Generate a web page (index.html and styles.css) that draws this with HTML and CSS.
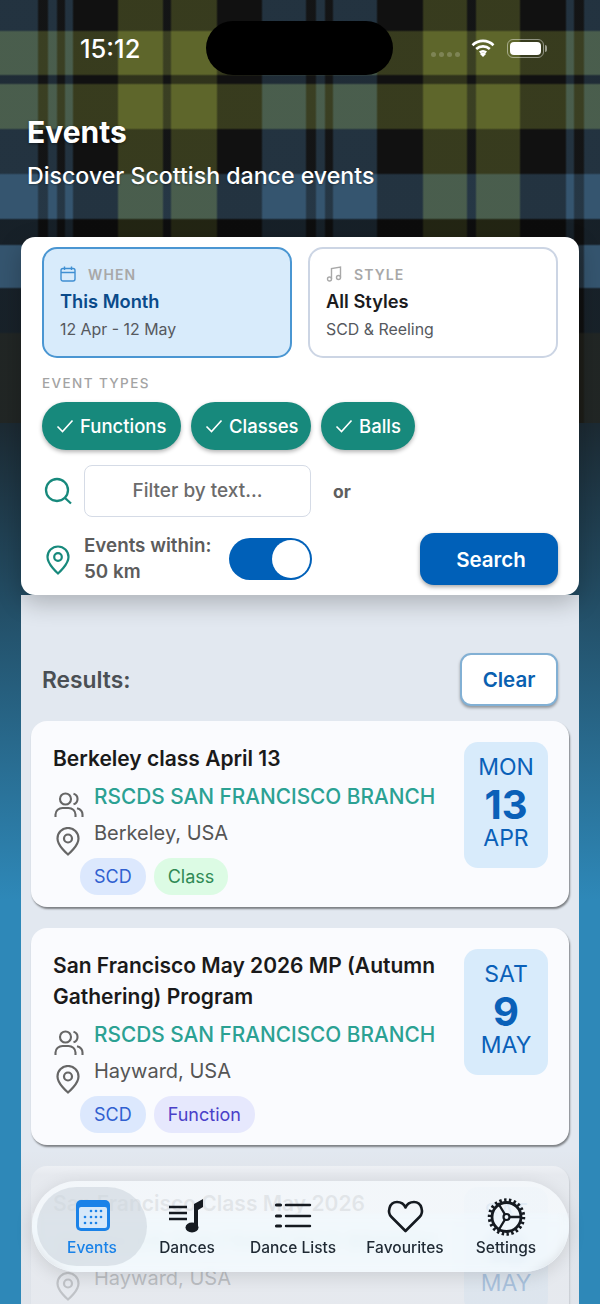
FILE: index.html
```html
<!DOCTYPE html>
<html lang="en">
<head>
  <meta charset="UTF-8">
  <meta name="viewport" content="width=device-width, initial-scale=1.0">
  <title>Events</title>
  <link rel="stylesheet" href="styles.css">
</head>
<body>
  <div class="status">
    <div class="status-time">15:12</div>
    <div class="island"></div>
    <div class="status-icons">
      <div class="signal"><span></span><span></span><span></span><span></span></div>
      <svg class="wifi" width="24" height="18" viewBox="0 0 24 18">
        <path d="M1.5 6.2a15 15 0 0 1 21 0M5.2 10a10 10 0 0 1 13.6 0M8.8 13.6a5 5 0 0 1 6.4 0" fill="none" stroke="#fff" stroke-width="2.6"/>
        <path d="M12 18l-3-3a4.4 4.4 0 0 1 6 0z" fill="#fff"/>
      </svg>
      <div class="battery"><div class="battery-fill"></div></div>
    </div>
  </div>

  <header class="page-head">
    <h1>Events</h1>
    <p>Discover Scottish dance events</p>
  </header>

  <main class="content">
    <section class="filters">
      <div class="selectors">
        <div class="selector selector-active">
          <div class="selector-label">
            <svg width="16" height="16" viewBox="0 0 16 16" fill="none" stroke="#3f8fd2" stroke-width="1.4">
              <rect x="1" y="2.5" width="14" height="12.5" rx="2"/>
              <path d="M1 6.5h14M4.5 0.5v3.5M11.5 0.5v3.5"/>
            </svg>
            <span>WHEN</span>
          </div>
          <div class="selector-title">This Month</div>
          <div class="selector-sub">12 Apr - 12 May</div>
        </div>
        <div class="selector">
          <div class="selector-label">
            <svg width="16" height="16" viewBox="0 0 16 16" fill="none" stroke="#a8a8a8" stroke-width="1.4">
              <path d="M5.5 13V2.5l9-1.5v10.5"/>
              <circle cx="3.5" cy="13" r="2"/>
              <circle cx="12.5" cy="11.5" r="2"/>
            </svg>
            <span>STYLE</span>
          </div>
          <div class="selector-title">All Styles</div>
          <div class="selector-sub">SCD &amp; Reeling</div>
        </div>
      </div>

      <div class="types-label">EVENT TYPES</div>
      <div class="chips">
        <div class="chip chip-functions"><svg width="18" height="14" viewBox="0 0 18 14"><path d="M1.5 7.5l5 5L16.5 1.5" fill="none" stroke="#fff" stroke-width="1.6"/></svg>Functions</div>
        <div class="chip chip-classes"><svg width="18" height="14" viewBox="0 0 18 14"><path d="M1.5 7.5l5 5L16.5 1.5" fill="none" stroke="#fff" stroke-width="1.6"/></svg>Classes</div>
        <div class="chip chip-balls"><svg width="18" height="14" viewBox="0 0 18 14"><path d="M1.5 7.5l5 5L16.5 1.5" fill="none" stroke="#fff" stroke-width="1.6"/></svg>Balls</div>
      </div>

      <div class="search-row">
        <div class="row-icon">
          <svg width="28" height="28" viewBox="0 0 28 28" fill="none" stroke="#17897c" stroke-width="2.3">
            <circle cx="13" cy="13" r="11"/>
            <path d="M21 21l6 5.5"/>
          </svg>
        </div>
        <div class="text-filter">Filter by text...</div>
        <div class="or">or</div>
      </div>

      <div class="within-row">
        <div class="row-icon">
          <svg class="within-pin" width="24" height="30" viewBox="0 0 24 30" fill="none" stroke="#17897c" stroke-width="2.2">
            <path d="M12 28.5S1.500 19.500 1.500 12a10.500 10.500 0 0 1 21 0C22.500 19.500 12 28.500 12 28.500z"/>
            <circle cx="12" cy="12" r="3.800"/>
          </svg>
        </div>
        <div class="within-text">Events within:<br>50 km</div>
        <div class="toggle"><div class="toggle-knob"></div></div>
        <div class="search-btn">Search</div>
      </div>
    </section>

    <section class="results">
      <div class="results-head">
        <div class="results-title">Results:</div>
        <div class="clear-btn">Clear</div>
      </div>

      <article class="event">
        <div class="event-main">
          <div class="event-title">Berkeley class April 13</div>
          <div class="meta">
            <div class="meta-icons">
              <svg width="30" height="26" viewBox="0 0 30 26" fill="none" stroke="#666" stroke-width="2.100">
                <circle cx="11.500" cy="7" r="5.500"/>
                <path d="M1.500 25v-2.500c0-4 3.500-6.500 7-6.500h6c3.500 0 7 2.500 7 6.500V25"/>
                <path d="M19.500 1.700a5.500 5.500 0 0 1 0 10.600M23 16.200c3 .8 5.500 3 5.500 6.300V25"/>
              </svg>
              <svg width="24" height="29" viewBox="0 0 24 29" fill="none" stroke="#666" stroke-width="2.200">
                <path d="M12 27.500S1.500 19 1.500 11.500a10.500 10.500 0 0 1 21 0C22.500 19 12 27.500 12 27.500z"/>
                <circle cx="12" cy="11.500" r="4"/>
              </svg>
            </div>
            <div class="meta-text">
              <div class="event-org">RSCDS SAN FRANCISCO BRANCH</div>
              <div class="event-place">Berkeley, USA</div>
            </div>
          </div>
          <div class="tags">
            <span class="tag tag-scd">SCD</span>
            <span class="tag tag-class">Class</span>
          </div>
        </div>
        <div class="date-box">
          <div class="date-word">MON</div>
          <div class="date-num">13</div>
          <div class="date-word">APR</div>
        </div>
      </article>

      <article class="event">
        <div class="event-main">
          <div class="event-title">San Francisco May 2026 MP (Autumn Gathering) Program</div>
          <div class="meta">
            <div class="meta-icons">
              <svg width="30" height="26" viewBox="0 0 30 26" fill="none" stroke="#666" stroke-width="2.100">
                <circle cx="11.500" cy="7" r="5.500"/>
                <path d="M1.500 25v-2.500c0-4 3.500-6.500 7-6.500h6c3.500 0 7 2.500 7 6.500V25"/>
                <path d="M19.500 1.700a5.500 5.500 0 0 1 0 10.600M23 16.200c3 .8 5.500 3 5.500 6.300V25"/>
              </svg>
              <svg width="24" height="29" viewBox="0 0 24 29" fill="none" stroke="#666" stroke-width="2.200">
                <path d="M12 27.500S1.500 19 1.500 11.500a10.500 10.500 0 0 1 21 0C22.500 19 12 27.500 12 27.500z"/>
                <circle cx="12" cy="11.500" r="4"/>
              </svg>
            </div>
            <div class="meta-text">
              <div class="event-org">RSCDS SAN FRANCISCO BRANCH</div>
              <div class="event-place">Hayward, USA</div>
            </div>
          </div>
          <div class="tags">
            <span class="tag tag-scd">SCD</span>
            <span class="tag tag-function">Function</span>
          </div>
        </div>
        <div class="date-box">
          <div class="date-word">SAT</div>
          <div class="date-num">9</div>
          <div class="date-word">MAY</div>
        </div>
      </article>

      <article class="event">
        <div class="event-main">
          <div class="event-title">San Francisco Class May 2026</div>
          <div class="meta">
            <div class="meta-icons">
              <svg width="30" height="26" viewBox="0 0 30 26" fill="none" stroke="#666" stroke-width="2.100">
                <circle cx="11.500" cy="7" r="5.500"/>
                <path d="M1.500 25v-2.500c0-4 3.500-6.500 7-6.500h6c3.500 0 7 2.500 7 6.500V25"/>
                <path d="M19.500 1.700a5.500 5.500 0 0 1 0 10.600M23 16.200c3 .8 5.500 3 5.500 6.300V25"/>
              </svg>
              <svg width="24" height="29" viewBox="0 0 24 29" fill="none" stroke="#666" stroke-width="2.200">
                <path d="M12 27.500S1.500 19 1.500 11.500a10.500 10.500 0 0 1 21 0C22.500 19 12 27.500 12 27.500z"/>
                <circle cx="12" cy="11.500" r="4"/>
              </svg>
            </div>
            <div class="meta-text">
              <div class="event-org">RSCDS SAN FRANCISCO BRANCH</div>
              <div class="event-place">Hayward, USA</div>
            </div>
          </div>
        </div>
        <div class="date-box">
          <div class="date-word">SAT</div>
          <div class="date-num">16</div>
          <div class="date-word">MAY</div>
        </div>
      </article>

      <div class="results-fade"></div>
    </section>
  </main>

  <nav class="tabbar">
    <div class="tab tab-events tab-active">
      <svg width="40" height="40" viewBox="0 0 40 40">
        <rect x="4" y="4" width="34" height="31" rx="5" fill="#1a82e8"/>
        <rect x="7" y="11" width="28" height="21" rx="2" fill="#d6e8f9"/>
        <g fill="#1a82e8">
          <circle cx="19" cy="15" r="1.300"/><circle cx="24" cy="15" r="1.300"/><circle cx="29" cy="15" r="1.300"/>
          <circle cx="13" cy="21" r="1.300"/><circle cx="19" cy="21" r="1.300"/><circle cx="24" cy="21" r="1.300"/><circle cx="29" cy="21" r="1.300"/>
          <circle cx="13" cy="27" r="1.300"/><circle cx="19" cy="27" r="1.300"/><circle cx="24" cy="27" r="1.300"/>
        </g>
      </svg>
      <span>Events</span>
    </div>
    <div class="tab tab-dances">
      <svg width="40" height="40" viewBox="0 0 40 40">
        <path d="M2 11h18M2 17h18M2 23h18" stroke="#151a20" stroke-width="2.400" fill="none"/>
        <path d="M27 8l9-5v8l-5 3v17h-4z" fill="#151a20"/>
        <ellipse cx="25" cy="31.500" rx="6.500" ry="5" fill="#151a20"/>
      </svg>
      <span>Dances</span>
    </div>
    <div class="tab tab-lists">
      <svg width="40" height="40" viewBox="0 0 40 40" stroke="#151a20" fill="none" stroke-linecap="round">
        <path d="M3.500 9h4M3.500 20h4M3.500 30h4" stroke-width="3.200"/>
        <path d="M13 9h24M13 20h24M13 30h24" stroke-width="2.400"/>
      </svg>
      <span>Dance Lists</span>
    </div>
    <div class="tab tab-favourites">
      <svg width="40" height="40" viewBox="0 0 40 40">
        <path d="M20.500 35L6.500 21C2 16.500 4 6 12 6c4 0 7 2 8.500 5.500C22 8 25 6 29 6c8 0 10 10.500 5.500 15z" fill="none" stroke="#151a20" stroke-width="2.600" stroke-linejoin="round"/>
      </svg>
      <span>Favourites</span>
    </div>
    <div class="tab tab-settings">
      <svg width="40" height="40" viewBox="0 0 40 40" fill="none" stroke="#151a20">
        <circle cx="20.500" cy="21" r="17" stroke-width="3.500" pathLength="44" stroke-dasharray="1 1"/>
        <circle cx="20.500" cy="21" r="14.500" stroke-width="2.800"/>
        <circle cx="20.500" cy="21" r="3" stroke-width="2.200"/>
        <path d="M23.500 21h11M19 18.500l-7-11.500M19 23.500l-7 11.500" stroke-width="2.400"/>
      </svg>
      <span>Settings</span>
    </div>
  </nav>
</body>
</html>
```

FILE: styles.css
```css
* {
  box-sizing: border-box;
}
html, body {
  margin: 0;
  padding: 0;
}
body {
  position: relative;
  width: 600px;
  height: 1304px;
  display: flex;
  flex-direction: column;
  overflow: hidden;
  font-family: Inter, "Liberation Sans", sans-serif;
  background-color: #2e88b8;
  background-image:
    linear-gradient(180deg,
      rgba(17,17,17,.5) 0 30px, rgba(94,102,43,.5) 32px 74px, rgba(17,17,17,.6) 76px 83px,
      rgba(94,102,43,.5) 85px 128px, rgba(17,17,17,.5) 130px 173px, rgba(53,85,111,.5) 175px 218px,
      rgba(10,10,10,.7) 220px 244px, rgba(53,85,111,.4) 246px 287px, rgba(12,12,12,.7) 289px 332px,
      rgba(30,30,24,.85) 334px 423px),
    linear-gradient(90deg,
      #35556f 0 37px, #16181a 39px 47px, #35556f 49px 56px, #16181a 58px 64px, #35556f 66px 72px,
      #111 74px 117px, #5e662b 119px 162px, #16181a 164px 170px, #5e662b 172px 216px, #111 218px 261px,
      #35556f 263px 305px, #16181a 307px 315px, #35556f 317px 324px, #16181a 326px 332px, #35556f 334px 376px,
      #111 378px 422px, #5e662b 424px 466px, #16181a 468px 475px, #5e662b 477px 519px, #111 521px 565px,
      #35556f 567px 573px, #16181a 575px 583px, #35556f 585px 600px),
    linear-gradient(180deg, #1c2a33 423px, #2e88b8 900px);
  background-size: 600px 423px, 600px 423px, 100% 100%;
  background-repeat: no-repeat;
}

/* status bar */
.status {
  flex: none;
  display: grid;
  grid-template-columns: 206px 187px 1fr;
  height: 75px;
  padding-top: 21px;
}
.status-time {
  padding: 11px 0 0 80px;
  font-size: 25.500px;
  line-height: 34px;
  font-weight: 500;
  color: #fff;
}
.island {
  height: 54px;
  background: #000;
  border-radius: 27px;
}
.status-icons {
  display: flex;
  align-items: center;
  height: 54px;
  padding-left: 38px;
}
.signal {
  display: flex;
  gap: 3px;
  margin-top: 13px;
}
.signal span {
  width: 5px;
  height: 5px;
  border-radius: 50%;
  background: rgba(255, 255, 255, .2);
}
.wifi {
  margin-left: 11px;
}
.battery {
  position: relative;
  width: 37px;
  height: 19px;
  margin-left: 12px;
  padding: 2px;
  border: 1px solid rgba(255, 255, 255, .45);
  border-radius: 6px;
}
.battery::after {
  content: "";
  position: absolute;
  right: -4px;
  top: 5px;
  width: 2px;
  height: 7px;
  background: rgba(255, 255, 255, .5);
  border-radius: 0 2px 2px 0;
}
.battery-fill {
  height: 100%;
  background: #fff;
  border-radius: 4px;
}

.page-head {
  flex: none;
  height: 162px;
  padding: 39px 0 0 27px;
  color: #fff;
}
.page-head h1 {
  margin: 0;
  font-size: 30px;
  line-height: 36px;
  font-weight: 700;
  text-shadow: 0 1px 3px rgba(0, 0, 0, .4);
}
.page-head p {
  margin: 9px 0 0;
  font-size: 23.150px;
  line-height: 34px;
  font-weight: 500;
  text-shadow: 0 1px 2px rgba(0, 0, 0, .3);
}

.content {
  flex: 1;
  min-height: 0;
  display: flex;
  flex-direction: column;
  margin: 0 21px;
}

/* filter card */
.filters {
  flex: none;
  position: relative;
  z-index: 1;
  height: 358px;
  padding: 10px 21px;
  background: #fff;
  border-radius: 14px;
  box-shadow: 0 8px 24px rgba(0, 0, 0, .24);
}
.selectors {
  display: flex;
  gap: 16px;
}
.selector {
  width: 250px;
  height: 111px;
  padding: 15px 16px;
  background: #fff;
  border: 2px solid #ccd5e4;
  border-radius: 15px;
}
.selector-active {
  background: #d8ebfb;
  border-color: #4a96d2;
}
.selector-label {
  display: flex;
  align-items: center;
  gap: 12px;
  height: 20px;
  font-size: 14px;
  font-weight: 600;
  letter-spacing: 1.100px;
  color: #a8a8a8;
}
.selector-title {
  margin-top: 5px;
  font-size: 18.300px;
  line-height: 24px;
  font-weight: 600;
  color: #1c1c1e;
}
.selector-active .selector-title {
  color: #0a4a8a;
}
.selector-sub {
  margin-top: 7px;
  font-size: 15.900px;
  line-height: 20px;
  color: #56595e;
}
.types-label {
  margin-top: 17px;
  font-size: 13.500px;
  line-height: 17px;
  font-weight: 500;
  letter-spacing: 1.400px;
  color: #a3a3a3;
}
.chips {
  display: flex;
  gap: 10px;
  margin-top: 10px;
}
.chip {
  display: flex;
  align-items: center;
  gap: 6px;
  height: 48px;
  padding-left: 14px;
  font-size: 18.500px;
  font-weight: 500;
  color: #fff;
  background: #17897c;
  border-radius: 24px;
  box-shadow: 0 2px 4px rgba(0, 0, 0, .3);
}
.chip-functions { width: 139px; }
.chip-classes { width: 120px; }
.chip-balls { width: 94px; }

.search-row,
.within-row {
  display: flex;
  align-items: center;
  height: 52px;
}
.search-row {
  margin-top: 15px;
}
.within-row {
  margin-top: 16px;
}
.row-icon {
  flex: none;
  width: 42px;
  padding-left: 2px;
  display: flex;
}
.within-pin {
  margin-left: 2px;
  margin-top: 1px;
}
.text-filter {
  width: 227px;
  height: 52px;
  border: 1.500px solid #d5dbe6;
  border-radius: 8px;
  font-size: 19px;
  line-height: 50px;
  font-weight: 500;
  text-align: center;
  color: #6b6b6b;
}
.or {
  margin-left: 22px;
  font-size: 17.500px;
  font-weight: 700;
  color: #5e5e5e;
}
.within-text {
  width: 145px;
  font-size: 18.800px;
  line-height: 26px;
  font-weight: 600;
  color: #5c5c5c;
  white-space: nowrap;
}
.toggle {
  width: 83px;
  height: 42px;
  padding: 2px 2px 2px 43px;
  background: #0060b8;
  border-radius: 21px;
}
.toggle-knob {
  width: 38px;
  height: 38px;
  background: #fff;
  border-radius: 50%;
}
.search-btn {
  width: 138px;
  height: 52px;
  margin-left: auto;
  padding-left: 4px;
  font-size: 20.500px;
  line-height: 53px;
  font-weight: 600;
  text-align: center;
  color: #fff;
  background: #0060b8;
  border-radius: 14px;
  box-shadow: 0 2px 4px rgba(0, 0, 0, .35);
}

/* results */
.results {
  position: relative;
  flex: 1;
  min-height: 0;
  padding: 58px 10px 0;
  overflow: hidden;
  background: #e2e8f0;
}
.results-head {
  display: flex;
  align-items: center;
  justify-content: space-between;
  height: 53px;
  margin-bottom: 15px;
  padding: 0 11px;
}
.results-title {
  font-size: 22.800px;
  font-weight: 600;
  color: #4a4f54;
}
.clear-btn {
  width: 98px;
  height: 53px;
  font-size: 20.500px;
  line-height: 49px;
  font-weight: 600;
  text-align: center;
  color: #0a60b0;
  background: #fff;
  border: 2px solid #82b0d4;
  border-radius: 11px;
  box-shadow: 0 2px 3px rgba(0, 0, 0, .35);
}
.event {
  display: flex;
  justify-content: space-between;
  margin-bottom: 21px;
  padding: 21px 21px 12px 22px;
  background: #fafbfe;
  border-radius: 16px;
  box-shadow: 1px 2px 2px rgba(0, 0, 0, .45);
}
.event-main {
  width: 390px;
}
.event-title {
  padding-top: 1px;
  font-size: 21px;
  line-height: 31px;
  font-weight: 600;
  color: #1a1a1a;
}
.meta {
  display: flex;
  margin-top: 4px;
}
.meta-icons {
  flex: none;
  display: flex;
  flex-direction: column;
  align-items: flex-start;
  gap: 9px;
  width: 41px;
  height: 74px;
  padding: 14px 0 0 1px;
}
.meta-icons svg {
  flex: none;
}
.meta-icons svg:last-child {
  margin-left: 2px;
}
.meta-text {
  white-space: nowrap;
}
.event-org {
  font-size: 20.800px;
  line-height: 37px;
  font-weight: 500;
  color: #2ba193;
}
.event-place {
  font-size: 20px;
  line-height: 37px;
  color: #555;
}
.tags {
  display: flex;
  gap: 8px;
  margin: 6px 0 0 27px;
}
.tag {
  height: 37px;
  padding: 0 14px;
  font-size: 18px;
  line-height: 37px;
  border-radius: 18px;
}
.tag-scd {
  color: #3060d0;
  background: #dce8fd;
}
.tag-class {
  color: #2f8a55;
  background: #dcfbe4;
}
.tag-function {
  color: #4a40c8;
  background: #e6e8fd;
}
.date-box {
  flex: none;
  width: 84px;
  height: 126px;
  padding-top: 11px;
  text-align: center;
  color: #0a60b8;
  background: #d8ebfb;
  border-radius: 14px;
}
.date-word {
  font-size: 23px;
  line-height: 28px;
}
.date-num {
  margin-bottom: -5px;
  font-size: 40px;
  line-height: 48px;
  font-weight: 700;
}
.results-fade {
  position: absolute;
  left: 0;
  right: 0;
  bottom: 0;
  height: 154px;
  background: linear-gradient(180deg, rgba(223, 227, 233, 0), rgba(223, 227, 233, .74) 25px);
}

/* tab bar, only the lower part of the glass blurs what is behind it */
.tabbar {
  position: absolute;
  left: 32px;
  bottom: 32px;
  z-index: 2;
  display: flex;
  width: 537px;
  height: 91px;
  padding: 6px 5px;
  background: linear-gradient(180deg, rgba(248, 252, 255, .7) 30px, rgba(244, 251, 255, .82) 36px);
  border-radius: 46px;
  box-shadow: 0 4px 18px rgba(0, 0, 0, .12);
}
.tabbar::before {
  content: "";
  position: absolute;
  left: 0;
  right: 0;
  top: 32px;
  bottom: 0;
  backdrop-filter: blur(5px);
  border-radius: 0 0 46px 46px;
}
.tab {
  position: relative;
  flex: none;
  display: flex;
  flex-direction: column;
  align-items: center;
  padding-top: 9px;
  font-size: 15.500px;
  line-height: 20px;
  font-weight: 500;
  color: #1f2933;
}
.tab svg {
  margin-bottom: 2px;
}
.tab-active {
  color: #1a82e8;
  background: rgba(205, 214, 222, .6);
  border-radius: 40px;
}
.tab-events { width: 110px; }
.tab-dances { width: 80px; }
.tab-lists { width: 132px; }
.tab-favourites { width: 92px; }
.tab-settings { width: 110px; }
```
